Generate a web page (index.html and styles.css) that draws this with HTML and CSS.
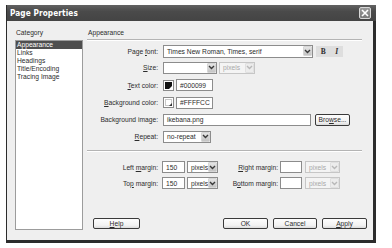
FILE: index.html
```html
<!DOCTYPE html>
<html lang="en">
  <head>
    <meta charset="UTF-8" />
    <meta name="viewport" content="width=device-width, initial-scale=1.0" />
    <title>Page Properties</title>
    <link rel="stylesheet" href="styles.css">
  </head>
  <body>
    <div class="dialog">
      <div class="titlebar">
        <span class="title">Page Properties</span>
        <span class="close">
          <svg width="8" height="8" viewBox="0 0 8 8">
            <path d="M1 1 L7 7 M7 1 L1 7" stroke="#fff" stroke-width="1.6" />
          </svg>
        </span>
      </div>

      <div class="body">
        <div class="category">
          <div class="caption">Category</div>
          <ul class="listbox">
            <li class="selected">Appearance</li>
            <li>Links</li>
            <li>Headings</li>
            <li>Title/Encoding</li>
            <li>Tracing Image</li>
          </ul>
        </div>

        <div class="panel">
          <div class="heading">Appearance</div>

          <div class="rows">
            <div class="row short">
              <span class="label">Page <u>f</u>ont:</span>
              <div class="select font-select">
                <span class="value">Times New Roman, Times, serif</span>
                <span class="arrow"><svg width="7" height="7" viewBox="0 0 7 7"><path d="M1 2 L3.5 4.5 L6 2" /></svg></span>
              </div>
              <div class="style-btns">
                <b>B</b>
                <i>I</i>
              </div>
            </div>

            <div class="row">
              <span class="label"><u>S</u>ize:</span>
              <div class="select size-select">
                <span class="value"></span>
                <span class="arrow"><svg width="7" height="7" viewBox="0 0 7 7"><path d="M1 2 L3.5 4.5 L6 2" /></svg></span>
              </div>
              <div class="select unit-select disabled">
                <span class="value">pixels</span>
                <span class="arrow"><svg width="7" height="7" viewBox="0 0 7 7"><path d="M1 2 L3.5 4.5 L6 2" /></svg></span>
              </div>
            </div>

            <div class="row tall">
              <span class="label"><u>T</u>ext color:</span>
              <span class="swatch dark"><span class="fill"></span></span>
              <div class="field color-field">#000099</div>
            </div>

            <div class="row">
              <span class="label"><u>B</u>ackground color:</span>
              <span class="swatch light"><span class="fill"></span></span>
              <div class="field color-field">#FFFFCC</div>
            </div>

            <div class="row">
              <span class="label">Background image:</span>
              <div class="field image-field">ikebana.png</div>
              <div class="button browse">Bro<u>w</u>se...</div>
            </div>

            <div class="row">
              <span class="label"><u>R</u>epeat:</span>
              <div class="select repeat-select">
                <span class="value">no-repeat</span>
                <span class="arrow"><svg width="7" height="7" viewBox="0 0 7 7"><path d="M1 2 L3.5 4.5 L6 2" /></svg></span>
              </div>
            </div>
          </div>

          <div class="sep"></div>

          <div class="margins">
            <div class="mrow">
              <span class="label">Left <u>m</u>argin:</span>
              <div class="field num-field">150</div>
              <div class="select px-select">
                <span class="value">pixels</span>
                <span class="arrow"><svg width="7" height="7" viewBox="0 0 7 7"><path d="M1 2 L3.5 4.5 L6 2" /></svg></span>
              </div>
              <span class="label2"><u>R</u>ight margin:</span>
              <div class="field num-field2"></div>
              <div class="select px-select2 disabled">
                <span class="value">pixels</span>
                <span class="arrow"><svg width="7" height="7" viewBox="0 0 7 7"><path d="M1 2 L3.5 4.5 L6 2" /></svg></span>
              </div>
            </div>
            <div class="mrow">
              <span class="label">To<u>p</u> margin:</span>
              <div class="field num-field">150</div>
              <div class="select px-select">
                <span class="value">pixels</span>
                <span class="arrow"><svg width="7" height="7" viewBox="0 0 7 7"><path d="M1 2 L3.5 4.5 L6 2" /></svg></span>
              </div>
              <span class="label2">B<u>o</u>ttom margin:</span>
              <div class="field num-field2"></div>
              <div class="select px-select2 disabled">
                <span class="value">pixels</span>
                <span class="arrow"><svg width="7" height="7" viewBox="0 0 7 7"><path d="M1 2 L3.5 4.5 L6 2" /></svg></span>
              </div>
            </div>
          </div>

          <div class="buttons">
            <div class="button help"><u>H</u>elp</div>
            <div class="button ok">OK</div>
            <div class="button cancel">Cancel</div>
            <div class="button apply"><u>A</u>pply</div>
          </div>
        </div>
      </div>
    </div>
  </body>
</html>
```

FILE: styles.css
```css
* {
  padding: 0;
  margin: 0;
  box-sizing: border-box;
}

body {
  background: #fff;
  font-family: 'Liberation Sans', Arial, sans-serif;
  font-size: 6.7px;
  color: #2c2c2c;
  width: 392px;
  height: 248px;
  overflow: hidden;
}

u {
  text-decoration: underline;
  text-underline-offset: 1px;
}

.dialog {
  width: 370px;
  height: 238px;
  margin: 5px 0 0 6px;
  background: #2c2c2c;
  padding: 0 3px 3px 1px;
  display: flex;
  flex-direction: column;
}

.titlebar {
  height: 16px;
  margin-right: -3px;
  padding: 0 5px 0 3px;
  background: linear-gradient(#626262, #4a4a4a 40%, #444);
  display: flex;
  align-items: center;
  justify-content: space-between;
}

.title {
  color: #fff;
  font-family: 'DejaVu Sans Condensed', 'DejaVu Sans', sans-serif;
  font-weight: bold;
  font-size: 8.2px;
  letter-spacing: 0.1px;
}

.close {
  width: 12px;
  height: 12px;
  border: 1px solid #d8d8d8;
  border-radius: 2px;
  background: linear-gradient(#9a9a9a, #7a7a7a);
  display: flex;
  align-items: center;
  justify-content: center;
}

.body {
  flex: 1;
  background: #efefef;
  padding: 8px 11px 10px 8px;
  display: flex;
  gap: 4px;
}

.category {
  width: 68px;
  display: flex;
  flex-direction: column;
}

.caption,
.heading {
  height: 8px;
  line-height: 8px;
  padding-left: 1px;
}

.listbox {
  list-style: none;
  margin-top: 3px;
  height: 190px;
  background: #fff;
  border: 1px solid #9c9c9c;
}

.listbox li {
  height: 8px;
  line-height: 8px;
  padding-left: 1px;
  white-space: nowrap;
}

.listbox li.selected {
  background: #4e4e4e;
  color: #fff;
}

.panel {
  flex: 1;
  display: flex;
  flex-direction: column;
}

.heading {
  height: 11px;
  border-bottom: 1px solid #b4b4b4;
  box-shadow: 0 1px 0 #fff;
}

.rows {
  margin-top: 3px;
}

.row,
.mrow {
  height: 17px;
  display: flex;
  align-items: center;
}

.row.short {
  height: 16px;
}

.row.tall {
  height: 18px;
}

.mrow {
  height: 16px;
}

.label {
  width: 71px;
  margin-right: 5px;
  text-align: right;
  white-space: nowrap;
}

.mrow .label {
  margin-right: 4px;
}

.label2 {
  width: 60px;
  margin-right: 2px;
  text-align: right;
  white-space: nowrap;
}

.field,
.select {
  height: 12px;
  background: #fff;
  border: 1px solid #8c8c8c;
  display: flex;
  align-items: center;
  white-space: nowrap;
  overflow: hidden;
}

.field {
  padding-left: 3px;
}

.select .value {
  flex: 1;
  padding-left: 3px;
}

.select .arrow {
  width: 9px;
  height: 10px;
  background: linear-gradient(#e4e4e4, #c4c4c4);
  border: 1px solid #d6d6d6;
  border-radius: 1px;
  display: flex;
  align-items: center;
  justify-content: center;
}

.select .arrow path {
  fill: none;
  stroke: #3a3a3a;
  stroke-width: 1.4;
}

.select.disabled {
  background: #f4f4f4;
  border-color: #c6c6c6;
  color: #a8a8a8;
}

.select.disabled .arrow {
  background: #ececec;
  border-color: #e0e0e0;
}

.select.disabled .arrow path {
  stroke: #b8b8b8;
}

.font-select {
  width: 150px;
  height: 13px;
}

.style-btns {
  width: 27px;
  height: 11px;
  margin-left: 3px;
  background: #dedede;
  display: flex;
  align-items: center;
  justify-content: space-around;
  font-family: 'Liberation Serif', serif;
  font-size: 7.5px;
  font-weight: bold;
}

.style-btns i {
  font-style: italic;
}

.size-select {
  width: 54px;
}

.unit-select {
  width: 36px;
  margin-left: 2px;
}

.swatch {
  width: 11px;
  height: 11px;
  border: 1px solid #8a8a8a;
  background: #fff;
  padding: 1px;
  position: relative;
}

.swatch .fill {
  display: block;
  width: 100%;
  height: 100%;
}

.swatch.dark .fill {
  background: #111;
}

.swatch.light .fill {
  background: #fff;
  border: 1px solid #c8c8c8;
}

.swatch::after {
  content: '';
  position: absolute;
  right: 1px;
  bottom: 1px;
  border-left: 3px solid transparent;
  border-bottom: 3px solid #fff;
}

.swatch.light::after {
  border-bottom-color: #333;
}

.color-field {
  width: 37px;
  margin-left: 2px;
}

.image-field {
  width: 148px;
}

.button {
  height: 12px;
  border: 1px solid #3a3a3a;
  border-radius: 2px;
  background: linear-gradient(#fdfdfd, #f2f2f2 70%, #dcdcdc);
  display: flex;
  align-items: center;
  justify-content: center;
  white-space: nowrap;
}

.browse {
  width: 35px;
  margin-left: 4px;
}

.repeat-select {
  width: 48px;
}

.sep {
  height: 1px;
  margin-top: 5px;
  background: #b4b4b4;
  box-shadow: 0 1px 0 #fff;
}

.margins {
  margin-top: 8px;
}

.num-field {
  width: 23px;
}

.px-select {
  width: 31px;
  margin-left: 2px;
}

.num-field2 {
  width: 22px;
}

.px-select2 {
  width: 35px;
  margin-left: 3px;
}

.buttons {
  margin-top: auto;
  margin-bottom: 1px;
  margin-right: -5px;
  padding-left: 6px;
  display: flex;
  gap: 5px;
}

.buttons .button {
  height: 11px;
}

.help {
  width: 47px;
}

.ok {
  width: 45px;
  margin-left: auto;
}

.cancel {
  width: 44px;
}

.apply {
  width: 45px;
}
```
